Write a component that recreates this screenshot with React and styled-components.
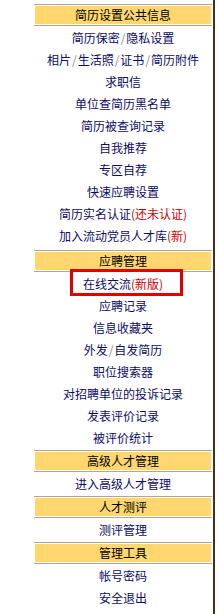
import React from "react";
import styled, { createGlobalStyle } from "styled-components";

const Global = createGlobalStyle`
  html, body { margin: 0; padding: 0; background: #fff; }
  body { font-family: "Noto Sans CJK SC", "Noto Sans", sans-serif; }
`;

const Page = styled.div`
  display: flex;
  width: 217px;
  min-height: 614px;
  padding-left: 34px;
  box-sizing: border-box;
`;

const Panel = styled.div`
  width: 178px;
  padding-top: 4px;
  display: flex;
  flex-direction: column;
`;

const Rule = styled.div`
  width: 2px;
  margin-left: 1px;
  background: #4a2f1f;
  align-self: stretch;
`;

const Section = styled.div`
  display: flex;
  flex-direction: column;
  padding-bottom: ${(p) => p.$gap}px;
`;

const Header = styled.div`
  height: 18px;
  border-top: 1px solid #bfa484;
  border-bottom: 1px solid #bfa484;
  padding: 1px 0;
  display: flex;
`;

const HeaderFill = styled.div`
  flex: 1;
  background: #ffd76e;
  margin-right: 1px;
  margin-left: 1px;
  display: flex;
  align-items: center;
  justify-content: center;
  font-size: 12px;
  line-height: 16px;
  color: #000;
`;

const Item = styled.div`
  position: relative;
  height: 22px;
  display: flex;
  align-items: center;
  justify-content: center;
  font-size: 12px;
  color: #0c0c66;
  white-space: nowrap;
`;

const Sep = styled.span`
  color: #8a8aa6;
  padding: 0 1px;
`;

const Note = styled.span`
  color: #d00000;
`;

const Highlight = styled.span`
  position: absolute;
  left: 36px;
  top: -3px;
  width: 113px;
  height: 27px;
  box-sizing: border-box;
  border: 3px solid #e00000;
  pointer-events: none;
`;

const sections = [
  {
    title: "简历设置公共信息",
    gap: 4,
    items: [
      { text: "简历保密/隐私设置" },
      { text: "相片/生活照/证书/简历附件" },
      { text: "求职信" },
      { text: "单位查简历黑名单" },
      { text: "简历被查询记录" },
      { text: "自我推荐" },
      { text: "专区自荐" },
      { text: "快速应聘设置" },
      { text: "简历实名认证", note: "(还未认证)" },
      { text: "加入流动党员人才库", note: "(新)" },
    ],
  },
  {
    title: "应聘管理",
    gap: 2,
    items: [
      { text: "在线交流", note: "(新版)", marked: true },
      { text: "应聘记录" },
      { text: "信息收藏夹" },
      { text: "外发/自发简历" },
      { text: "职位搜索器" },
      { text: "对招聘单位的投诉记录" },
      { text: "发表评价记录" },
      { text: "被评价统计" },
    ],
  },
  { title: "高级人才管理", gap: 2, items: [{ text: "进入高级人才管理" }] },
  { title: "人才测评", gap: 2, items: [{ text: "测评管理" }] },
  { title: "管理工具", gap: 2, items: [{ text: "帐号密码" }, { text: "安全退出" }] },
];

function Label({ text }) {
  const parts = text.split("/");
  return parts.map((p, i) => (
    <React.Fragment key={i}>
      {i > 0 && <Sep>/</Sep>}
      {p}
    </React.Fragment>
  ));
}

export default function App() {
  return (
    <>
      <Global />
      <Page>
        <Panel>
          {sections.map((s) => (
            <Section key={s.title} $gap={s.gap}>
              <Header>
                <HeaderFill>{s.title}</HeaderFill>
              </Header>
              {s.items.map((it) => (
                <Item key={it.text}>
                  <Label text={it.text} />
                  {it.note && <Note>{it.note}</Note>}
                  {it.marked && <Highlight />}
                </Item>
              ))}
            </Section>
          ))}
        </Panel>
        <Rule />
      </Page>
    </>
  );
}
